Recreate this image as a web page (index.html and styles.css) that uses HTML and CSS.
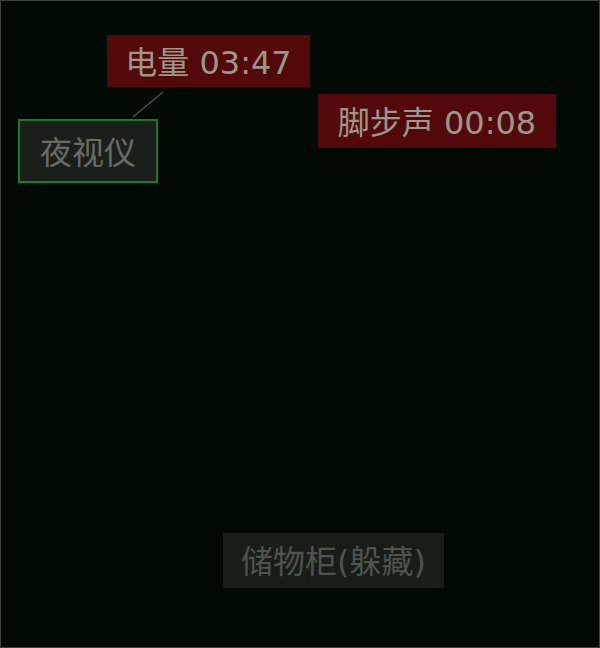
FILE: index.html
```html
<!DOCTYPE html>
<html lang="zh-CN">
<head>
<meta charset="utf-8">
<title>夜视监控</title>
<link rel="stylesheet" href="styles.css">
</head>
<body>
<main class="scene">
  <svg class="link" width="600" height="648" viewBox="0 0 600 648">
    <line x1="133" y1="117" x2="163" y2="92" />
  </svg>
  <div class="tag tag-alert tag-battery">电量 03:47</div>
  <div class="tag tag-alert tag-steps">脚步声 00:08</div>
  <div class="tag tag-item">夜视仪</div>
  <div class="tag tag-hide">储物柜(躲藏)</div>
</main>
</body>
</html>
```
FILE: styles.css
```css
html, body {
  margin: 0;
  padding: 0;
  background: #010a02;
}

.scene {
  position: relative;
  width: 600px;
  height: 648px;
  box-sizing: border-box;
  border: 1px solid #3c423c;
  background: #010a02;
  overflow: hidden;
  font-family: "DejaVu Sans", "Noto Sans CJK SC", sans-serif;
}

.link {
  position: absolute;
  left: -1px;
  top: -1px;
}

.link line {
  stroke: #4d584d;
  stroke-width: 1.2;
}

.tag {
  position: absolute;
  box-sizing: border-box;
  display: flex;
  align-items: center;
  justify-content: center;
  padding-top: 3px;
  font-size: 32px;
  line-height: 1;
  white-space: nowrap;
}

.tag-alert {
  background: #530909;
  color: #9a988a;
}

.tag-battery {
  left: 106px;
  top: 34px;
  width: 203px;
  height: 52px;
}

.tag-steps {
  left: 317px;
  top: 93px;
  width: 238px;
  height: 54px;
}

.tag-item {
  left: 17px;
  top: 118px;
  width: 140px;
  height: 64px;
  background: #1b1f1b;
  border: 2px solid #1a7a2c;
  color: #686c66;
}

.tag-hide {
  left: 222px;
  top: 532px;
  width: 221px;
  height: 55px;
  background: #181d18;
  color: #4e534e;
}
```
